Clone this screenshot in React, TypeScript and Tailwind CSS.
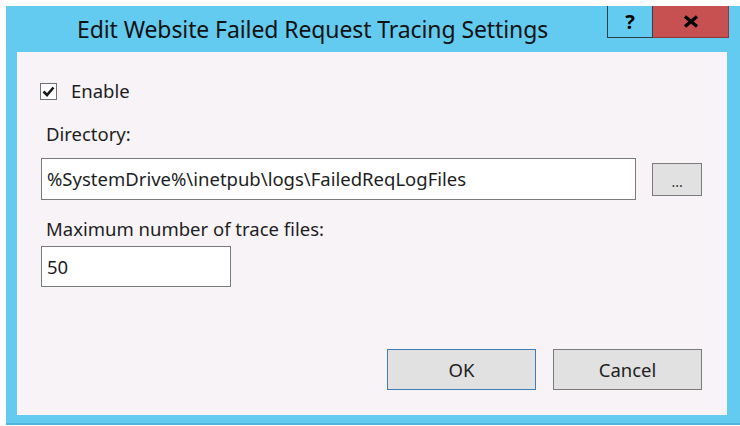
import React from 'react';

const font = { fontFamily: '"Noto Sans", "Open Sans", sans-serif' };

function CheckBox() {
  return (
    <span className="flex h-[17px] w-[17px] items-center justify-center border border-[#707070] bg-white">
      <svg width="13" height="11" viewBox="0 0 13 11">
        <path d="M1.5 5.5 L5 9 L11.5 1.5" fill="none" stroke="#1a1a1a" strokeWidth="2.6" />
      </svg>
    </span>
  );
}

export default function App() {
  return (
    <div className="h-[426px] w-[740px] overflow-hidden bg-white pl-[6px] pt-[6px]" style={font}>
      <div className="flex h-[419px] w-[734px] flex-col border-b-2 border-[#4fb6dc] bg-[#63cbf0] pl-[11px] pr-[13px] pb-[8px]">
        {/* title bar */}
        <div className="flex h-[46px] shrink-0 items-start">
          <div className="flex-1 pl-[60px] pt-[9px] text-[23px] leading-[28px] tracking-[-0.1px] text-[#111]">
            Edit Website Failed Request Tracing Settings
          </div>
          <div className="-mr-[2px] flex h-[32px]">
            <div className="flex w-[46px] items-center justify-center border-b border-l border-r border-[#2f3f48] bg-[#63cbf0] text-[20px] font-bold leading-none text-black">
              ?
            </div>
            <div className="flex w-[76px] items-center justify-center border-b border-r border-[#8c3a3a] bg-[#c75050]">
              <svg width="16" height="13" viewBox="0 0 16 13">
                <path d="M2 1.5 L14 11.5 M14 1.5 L2 11.5" stroke="#000" strokeWidth="3.4" />
              </svg>
            </div>
          </div>
        </div>

        {/* content */}
        <div className="flex flex-1 flex-col bg-[#f7f3f7] pl-[23px] pr-[25px] pt-[31px] text-[18.5px] text-[#1e1e1e]">
          <label className="flex h-[17px] items-center gap-[14px]">
            <CheckBox />
            <span className="leading-none">Enable</span>
          </label>

          <div className="mt-[21px] pl-[6px] leading-[26px]">Directory:</div>

          <div className="mt-[11px] flex items-center gap-[16px]">
            <div className="ml-[1px] flex h-[42px] w-[596px] items-center border border-[#7a7a7a] bg-white pl-[5px]">
              %SystemDrive%\inetpub\logs\FailedReqLogFiles
            </div>
            <button className="flex h-[33px] w-[50px] items-end justify-center border border-[#7a7a7a] bg-[#e1e1e1] pb-[6px] text-[14px] leading-none text-[#333]">
              ...
            </button>
          </div>

          <div className="mt-[16px] pl-[6px] leading-[26px]">Maximum number of trace files:</div>

          <div className="ml-[1px] mt-[4px] flex h-[41px] w-[190px] items-center border border-[#7a7a7a] bg-white pl-[5px]">
            50
          </div>

          <div className="mt-[62px] flex justify-end gap-[17px]">
            <button className="h-[41px] w-[149px] border border-[#3d7fb5] bg-[#e1e1e1] text-[#1e1e1e]">
              OK
            </button>
            <button className="h-[41px] w-[149px] border border-[#7a7a7a] bg-[#e1e1e1] text-[#1e1e1e]">
              Cancel
            </button>
          </div>
        </div>
      </div>
    </div>
  );
}
